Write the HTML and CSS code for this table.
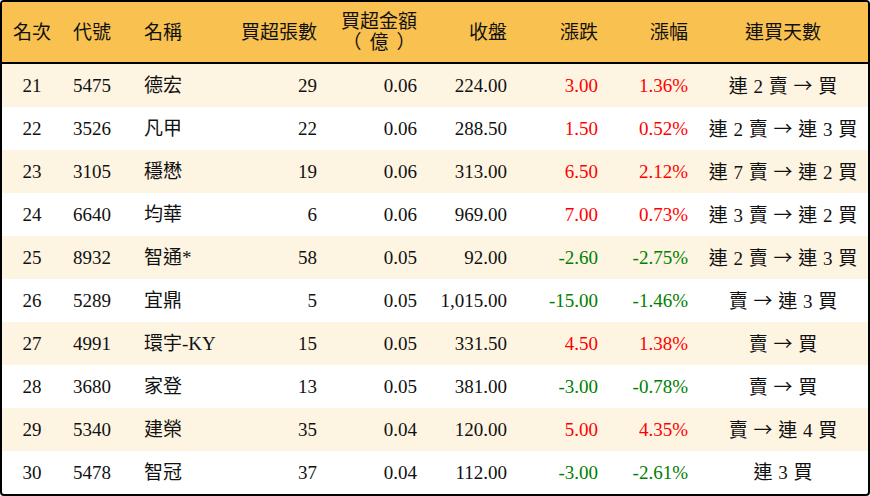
FILE: index.html
```html
<!DOCTYPE html>
<html lang="zh-Hant">
<head>
<meta charset="utf-8">
<link rel="stylesheet" href="styles.css">
</head>
<body>
<div class="frame">
<table class="grid">
<colgroup>
<col class="c1"><col class="c2"><col class="c3"><col class="c4"><col class="c5"><col class="c6"><col class="c7"><col class="c8"><col class="c9">
</colgroup>
<thead>
<tr>
<th class="ctr">名次</th>
<th class="lft">代號</th>
<th class="lft">名稱</th>
<th class="rgt">買超張數</th>
<th class="rgt"><span class="stack">買超金額<br><span class="po">（</span>億<span class="pc">）</span></span></th>
<th class="rgt">收盤</th>
<th class="rgt">漲跌</th>
<th class="rgt">漲幅</th>
<th class="ctr">連買天數</th>
</tr>
</thead>
<tbody>
<tr class="odd"><td class="ctr">21</td><td class="lft">5475</td><td class="lft">德宏</td><td class="rgt">29</td><td class="rgt">0.06</td><td class="rgt">224.00</td><td class="rgt up">3.00</td><td class="rgt up">1.36%</td><td class="ctr days">連 2 賣 <span class="arr">→</span> 買</td></tr>
<tr><td class="ctr">22</td><td class="lft">3526</td><td class="lft">凡甲</td><td class="rgt">22</td><td class="rgt">0.06</td><td class="rgt">288.50</td><td class="rgt up">1.50</td><td class="rgt up">0.52%</td><td class="ctr days">連 2 賣 <span class="arr">→</span> 連 3 買</td></tr>
<tr class="odd"><td class="ctr">23</td><td class="lft">3105</td><td class="lft">穩懋</td><td class="rgt">19</td><td class="rgt">0.06</td><td class="rgt">313.00</td><td class="rgt up">6.50</td><td class="rgt up">2.12%</td><td class="ctr days">連 7 賣 <span class="arr">→</span> 連 2 買</td></tr>
<tr><td class="ctr">24</td><td class="lft">6640</td><td class="lft">均華</td><td class="rgt">6</td><td class="rgt">0.06</td><td class="rgt">969.00</td><td class="rgt up">7.00</td><td class="rgt up">0.73%</td><td class="ctr days">連 3 賣 <span class="arr">→</span> 連 2 買</td></tr>
<tr class="odd"><td class="ctr">25</td><td class="lft">8932</td><td class="lft">智通*</td><td class="rgt">58</td><td class="rgt">0.05</td><td class="rgt">92.00</td><td class="rgt down">-2.60</td><td class="rgt down">-2.75%</td><td class="ctr days">連 2 賣 <span class="arr">→</span> 連 3 買</td></tr>
<tr><td class="ctr">26</td><td class="lft">5289</td><td class="lft">宜鼎</td><td class="rgt">5</td><td class="rgt">0.05</td><td class="rgt">1,015.00</td><td class="rgt down">-15.00</td><td class="rgt down">-1.46%</td><td class="ctr days">賣 <span class="arr">→</span> 連 3 買</td></tr>
<tr class="odd"><td class="ctr">27</td><td class="lft">4991</td><td class="lft">環宇-KY</td><td class="rgt">15</td><td class="rgt">0.05</td><td class="rgt">331.50</td><td class="rgt up">4.50</td><td class="rgt up">1.38%</td><td class="ctr days">賣 <span class="arr">→</span> 買</td></tr>
<tr><td class="ctr">28</td><td class="lft">3680</td><td class="lft">家登</td><td class="rgt">13</td><td class="rgt">0.05</td><td class="rgt">381.00</td><td class="rgt down">-3.00</td><td class="rgt down">-0.78%</td><td class="ctr days">賣 <span class="arr">→</span> 買</td></tr>
<tr class="odd"><td class="ctr">29</td><td class="lft">5340</td><td class="lft">建榮</td><td class="rgt">35</td><td class="rgt">0.04</td><td class="rgt">120.00</td><td class="rgt up">5.00</td><td class="rgt up">4.35%</td><td class="ctr days">賣 <span class="arr">→</span> 連 4 買</td></tr>
<tr><td class="ctr">30</td><td class="lft">5478</td><td class="lft">智冠</td><td class="rgt">37</td><td class="rgt">0.04</td><td class="rgt">112.00</td><td class="rgt down">-3.00</td><td class="rgt down">-2.61%</td><td class="ctr days">連 3 買</td></tr>
</tbody>
</table>
</div>
</body>
</html>
```
FILE: styles.css
```css
html, body {
  margin: 0;
  padding: 0;
  background: #ffffff;
}
body {
  font-family: "Liberation Serif", "Noto Sans CJK TC", serif;
  font-size: 19px;
  color: #111111;
}
.frame {
  width: 866px;
  height: 492px;
  border: 2px solid #000000;
  border-radius: 4px;
  overflow: hidden;
  background: #ffffff;
}
.grid {
  width: 866px;
  table-layout: fixed;
  border-collapse: collapse;
  border-spacing: 0;
}
.c1 { width: 60px; }
.c2 { width: 72px; }
.c3 { width: 96px; }
.c4 { width: 97px; }
.c5 { width: 100px; }
.c6 { width: 90px; }
.c7 { width: 91px; }
.c8 { width: 90px; }
.c9 { width: 170px; }
thead tr {
  background: #f9c14f;
  height: 60px;
}
th {
  font-weight: normal;
  height: 60px;
  padding: 0;
  vertical-align: middle;
  line-height: 21px;
  border-bottom: 2px solid #000000;
  white-space: nowrap;
}
td {
  height: 43px;
  padding: 0;
  vertical-align: middle;
  line-height: 22px;
  white-space: nowrap;
}
tbody tr.odd { background: #fdf4e2; }
.ctr { text-align: center; }
.lft { text-align: left; padding-left: 10px; }
.rgt { text-align: right; padding-right: 10px; }
td.lft:nth-child(2), th.lft:nth-child(2) { padding-left: 11px; }
.days { word-spacing: 1px; }
.stack {
  display: inline-block;
  text-align: center;
}
.po { margin-right: 8px; }
.pc { margin-left: 8px; }
.arr {
  font-family: "Noto Sans CJK TC", sans-serif;
}
.up { color: #ff0000; }
.down { color: #008000; }
```
